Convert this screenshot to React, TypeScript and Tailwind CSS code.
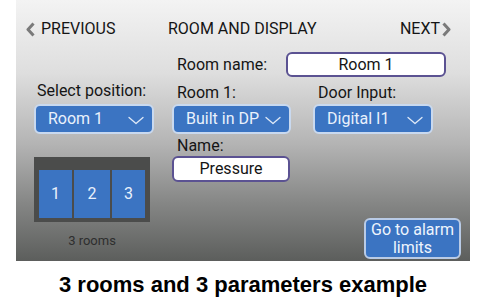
import React from "react";

const Chevron = () => (
  <svg width="16" height="9" viewBox="0 0 16 9" className="shrink-0 mt-[3px]">
    <path d="M1 1.5 L8 7.5 L15 1.5" fill="none" stroke="#dfe9f7" strokeWidth="1.3" strokeLinecap="round" strokeLinejoin="round" />
  </svg>
);

const NavArrow = ({ dir }: { dir: "left" | "right" }) => (
  <svg width="9" height="15" viewBox="0 0 9 15" className="shrink-0">
    <path
      d={dir === "left" ? "M7.5 1.5 L2 7.5 L7.5 13.5" : "M1.5 1.5 L7 7.5 L1.5 13.5"}
      fill="none"
      stroke="#7a7a7a"
      strokeWidth="3"
      strokeLinejoin="round"
    />
  </svg>
);

const Dropdown = ({ label, w }: { label: string; w: string }) => (
  <div className={`${w} h-[30px] rounded-[6px] bg-[#3b74c2] border-2 border-[#c9d9ef] flex items-center pl-[12px] pr-[8px] text-[#e9f1fc] text-[16px] leading-[20px]`}>
    <span className="flex-1 whitespace-nowrap">{label}</span>
    <Chevron />
  </div>
);

export default function App() {
  return (
    <div className="w-[492px] h-[305px] bg-white overflow-hidden" style={{ fontFamily: "Roboto, 'Noto Sans', sans-serif" }}>
      <div className="ml-[16px] w-[454px] h-[261px] flex flex-col bg-[linear-gradient(to_bottom,#f3f3f3_0%,#dedede_28%,#b4b4b4_55%,#858685_78%,#5c5e5c_100%)]">
        {/* Header */}
        <div className="h-[52px] pt-[19px] flex items-start text-[16px] leading-[20px] text-[#151515]">
          <div className="w-[152px] pl-[10px] flex items-center gap-[6px] h-[20px]">
            <NavArrow dir="left" />
            <span>PREVIOUS</span>
          </div>
          <span>ROOM AND DISPLAY</span>
          <div className="ml-auto pr-[19px] flex items-center gap-[2px] h-[20px]">
            <span>NEXT</span>
            <NavArrow dir="right" />
          </div>
        </div>
        {/* Body */}
        <div className="flex flex-1">
          {/* Left column */}
          <div className="ml-[18px] w-[120px] flex flex-col">
            <div className="mt-[29px] pl-[3px] text-[16px] leading-[20px] text-[#151515] whitespace-nowrap">Select position:</div>
            <div className="mt-[3px]">
              <Dropdown label="Room 1" w="w-[120px]" />
            </div>
            <div className="mt-[23px] w-[116px] h-[65px] bg-[#4b4c4b] flex gap-[2px] px-[5px] pt-[13px] pb-[4px]">
              {[
                ["1", "w-[33px]"],
                ["2", "w-[36px]"],
                ["3", "w-[33px]"],
              ].map(([n, w]) => (
                <div key={n} className={`${w} h-full bg-[#3b74c2] flex items-center justify-center text-[#e9f1fc] text-[16px]`}>
                  {n}
                </div>
              ))}
            </div>
            <div className="mt-[11px] w-[116px] text-center text-[13px] leading-[16px] text-[#2e2e2e]">3 rooms</div>
          </div>
          {/* Right column */}
          <div className="ml-[18px] flex-1 flex flex-col">
            <div className="flex items-center h-[25px]">
              <div className="w-[114px] pl-[5px] text-[16px] leading-[20px] text-[#151515]">Room name:</div>
              <div className="w-[160px] h-[25px] rounded-[6px] bg-white border-2 border-[#5b5292] flex items-center justify-center text-[16px] text-[#151515]">
                Room 1
              </div>
            </div>
            <div className="mt-[6px] flex gap-[22px] text-[16px] leading-[20px] text-[#151515]">
              <div className="w-[119px] pl-[5px]">Room 1:</div>
              <div className="w-[120px] pl-[5px]">Door Input:</div>
            </div>
            <div className="mt-[1px] flex gap-[22px]">
              <Dropdown label="Built in DP" w="w-[119px]" />
              <Dropdown label="Digital I1" w="w-[120px]" />
            </div>
            <div className="mt-[2px] pl-[5px] text-[16px] leading-[20px] text-[#151515]">Name:</div>
            <div className="w-[118px] h-[26px] rounded-[6px] bg-white border-2 border-[#5b5292] flex items-center justify-center text-[16px] text-[#151515]">
              Pressure
            </div>
            <div className="mt-[36px] flex justify-end pr-[9px]">
              <div className="w-[97px] h-[41px] rounded-[6px] bg-[#3b74c2] border-2 border-[#b9cbe6] flex flex-col items-center justify-center text-center text-[16px] leading-[18px] text-[#eef4fd]">
                <span>Go to alarm</span>
                <span>limits</span>
              </div>
            </div>
          </div>
        </div>
      </div>
      <div
        className="ml-[16px] w-[454px] mt-[11px] text-center text-[22px] leading-[26px] font-bold text-black"
        style={{ fontFamily: "'Liberation Sans', Arial, sans-serif" }}
      >
        3 rooms and 3 parameters example
      </div>
    </div>
  );
}
